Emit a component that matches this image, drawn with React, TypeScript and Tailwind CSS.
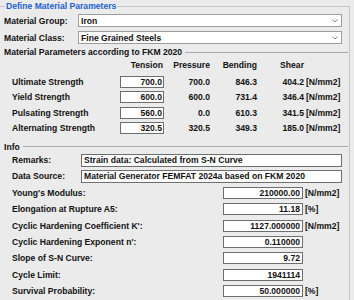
import React from "react";

const strengths = [
  { name: "Ultimate Strength", tension: "700.0", pressure: "700.0", bending: "846.3", shear: "404.2" },
  { name: "Yield Strength", tension: "600.0", pressure: "600.0", bending: "731.4", shear: "346.4" },
  { name: "Pulsating Strength", tension: "560.0", pressure: "0.0", bending: "610.3", shear: "341.5" },
  { name: "Alternating Strength", tension: "320.5", pressure: "320.5", bending: "349.3", shear: "185.0" },
];

const props = [
  { name: "Young's Modulus:", value: "210000.00", unit: "[N/mm2]" },
  { name: "Elongation at Rupture A5:", value: "11.18", unit: "[%]" },
  { name: "Cyclic Hardening Coefficient K':", value: "1127.000000", unit: "[N/mm2]" },
  { name: "Cyclic Hardening Exponent n':", value: "0.110000", unit: "" },
  { name: "Slope of S-N Curve:", value: "9.72", unit: "" },
  { name: "Cycle Limit:", value: "1941114", unit: "" },
  { name: "Survival Probability:", value: "50.000000", unit: "[%]" },
];

function Combo({ value }: { value: string }) {
  return (
    <div className="flex h-[13px] flex-1 items-center justify-between border border-[#9d9d9d] bg-white pl-[2px] pr-[3px]">
      <span>{value}</span>
      <svg width="6" height="4" viewBox="0 0 6 4" className="mt-[1px]">
        <polyline points="0.5,0.5 3,3 5.5,0.5" fill="none" stroke="#8a8a8a" strokeWidth="1" />
      </svg>
    </div>
  );
}

function Box({ children, className = "" }: { children: React.ReactNode; className?: string }) {
  return (
    <div className={"flex h-[12px] items-center border border-[#6e6e6e] bg-white " + className}>
      {children}
    </div>
  );
}

export default function App() {
  return (
    <div className="h-[300px] w-[354px] overflow-hidden bg-[#ebebeb] font-['Liberation_Sans',Arial,sans-serif] text-[8.6px] font-bold leading-[12px] text-[#111]">
      <fieldset className="w-[350px] min-w-0 border-t border-r border-[#c6c6c6] pb-4 pl-[4px] pr-[7px]">
        <legend className="ml-[1px] px-[1px] leading-[13px] text-[#1d5fd1]">Define Material Parameters</legend>

        <div className="mt-[1px] flex h-[13px] items-center">
          <span className="w-[74px]">Material Group:</span>
          <Combo value="Iron" />
        </div>
        <div className="mt-[4px] flex h-[13px] items-center">
          <span className="w-[74px]">Material Class:</span>
          <Combo value="Fine Grained Steels" />
        </div>

        <div className="mt-[2px] flex h-[12px] items-center">
          <span>Material Parameters according to FKM 2020</span>
          <div className="ml-[3px] mr-[-6px] flex-1 border-t border-[#a9a9a9]" />
        </div>

        <div className="mt-[1px] grid h-[12px] grid-cols-[108px_44px_46px_47px_47px_1fr] items-center pl-[8px] text-right">
          <span />
          <span className="pr-[1px]">Tension</span>
          <span>Pressure</span>
          <span>Bending</span>
          <span>Shear</span>
          <span />
        </div>

        <div className="mt-[5px] flex flex-col gap-y-[3.33px] pl-[8px]">
          {strengths.map((r) => (
            <div key={r.name} className="grid h-[12px] grid-cols-[108px_44px_46px_47px_47px_1fr] items-center">
              <span>{r.name}</span>
              <Box className="justify-end pr-[1px]">{r.tension}</Box>
              <span className="text-right">{r.pressure}</span>
              <span className="text-right">{r.bending}</span>
              <span className="text-right">{r.shear}</span>
              <span className="pl-[2px]">[N/mm2]</span>
            </div>
          ))}
        </div>

        <div className="mt-[7px] flex h-[12px] items-center">
          <span>Info</span>
          <div className="ml-[3px] mr-[-6px] flex-1 border-t border-[#a9a9a9]" />
        </div>

        <div className="mt-[1px] flex h-[13px] items-center pl-[8px]">
          <span className="w-[69px]">Remarks:</span>
          <div className="flex h-[13px] flex-1 items-center border border-[#6e6e6e] bg-white pl-[2px]">
            Strain data: Calculated from S-N Curve
          </div>
        </div>
        <div className="mt-[3px] flex h-[13px] items-center pl-[8px]">
          <span className="w-[69px]">Data Source:</span>
          <div className="flex h-[13px] flex-1 items-center border border-[#6e6e6e] bg-white pl-[2px]">
            Material Generator FEMFAT 2024a based on FKM 2020
          </div>
        </div>

        <div className="mt-[4px] flex flex-col gap-y-[4.33px] pl-[8px]">
          {props.map((p) => (
            <div key={p.name} className="grid h-[12px] grid-cols-[211px_80px_1fr] items-center">
              <span>{p.name}</span>
              <Box className="justify-end pr-[2px]">{p.value}</Box>
              <span className="pl-[2px]">{p.unit}</span>
            </div>
          ))}
        </div>
      </fieldset>
    </div>
  );
}
